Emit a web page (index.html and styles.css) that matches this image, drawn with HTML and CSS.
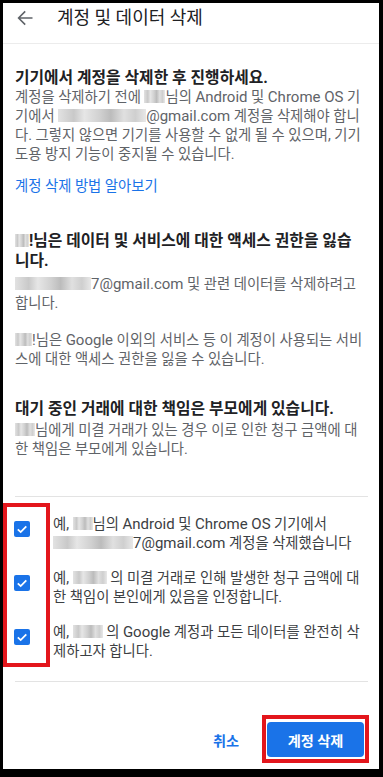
FILE: index.html
```html
<!DOCTYPE html>
<html lang="ko">
<head>
<meta charset="utf-8">
<title>계정 및 데이터 삭제</title>
<link rel="stylesheet" href="styles.css">
</head>
<body>
<div class="frame">
  <header class="topbar">
    <svg class="back" width="16" height="16" viewBox="0 0 16 16" aria-hidden="true">
      <path d="M15.5 8H1.6M8.2 1.4L1.6 8l6.6 6.6" fill="none" stroke="#5f6368" stroke-width="1.6"/>
    </svg>
    <h1 class="title">계정 및 데이터 삭제</h1>
  </header>
  <main class="content">
    <h2 class="h h1">기기에서 계정을 삭제한 후 진행하세요.</h2>
    <p class="p p1">계정을 삭제하기 전에 <span class="blur w21"></span>님의 <span class="en">Android</span> 및 <span class="en">Chrome OS</span> 기기에서 <span class="blur w88"></span><span class="en">@gmail.com</span> 계정을 삭제해야 합니다. 그렇지 않으면 기기를 사용할 수 없게 될 수 있으며, 기기 도용 방지 기능이 중지될 수 있습니다.</p>
    <a class="link" href="#">계정 삭제 방법 알아보기</a>
    <h2 class="h h2"><span class="blur w14"></span>!님은 데이터 및 서비스에 대한 액세스 권한을 잃습니다.</h2>
    <p class="p p2"><span class="blur w76"></span><span class="en">7@gmail.com</span> 및 관련 데이터를 삭제하려고 합니다.</p>
    <p class="p p3"><span class="blur w17"></span>!님은 <span class="en">Google</span> 이외의 서비스 등 이 계정이 사용되는 서비스에 대한 액세스 권한을 잃을 수 있습니다.</p>
    <h2 class="h h3">대기 중인 거래에 대한 책임은 부모에게 있습니다.</h2>
    <p class="p p4"><span class="blur w20"></span>님에게 미결 거래가 있는 경우 이로 인한 청구 금액에 대한 책임은 부모에게 있습니다.</p>
    <hr class="divider d1">
    <div class="checks">
      <span class="highlight hl-checks"></span>
      <label class="check">
        <span class="box"><svg width="16" height="16" viewBox="0 0 16 16"><path d="M3.8 8.3l2.9 2.8 5.6-5.8" fill="none" stroke="#fff" stroke-width="1.8"/></svg></span>
        <span class="ctext">예, <span class="blur w20"></span>님의 <span class="en">Android</span> 및 <span class="en">Chrome OS</span> 기기에서 <span class="blur w80"></span><span class="en">7@gmail.com</span> 계정을 삭제했습니다</span>
      </label>
      <label class="check">
        <span class="box"><svg width="16" height="16" viewBox="0 0 16 16"><path d="M3.8 8.3l2.9 2.8 5.6-5.8" fill="none" stroke="#fff" stroke-width="1.8"/></svg></span>
        <span class="ctext">예, <span class="blur w34"></span> 의 미결 거래로 인해 발생한 청구 금액에 대한 책임이 본인에게 있음을 인정합니다.</span>
      </label>
      <label class="check">
        <span class="box"><svg width="16" height="16" viewBox="0 0 16 16"><path d="M3.8 8.3l2.9 2.8 5.6-5.8" fill="none" stroke="#fff" stroke-width="1.8"/></svg></span>
        <span class="ctext">예, <span class="blur w30"></span> 의 <span class="en">Google</span> 계정과 모든 데이터를 완전히 삭제하고자 합니다.</span>
      </label>
    </div>
    <hr class="divider d2">
    <div class="actions">
      <button class="btn cancel" type="button">취소</button>
      <div class="primary-wrap">
        <button class="btn primary" type="button">계정 삭제</button>
        <span class="highlight hl-btn"></span>
      </div>
    </div>
  </main>
</div>
</body>
</html>
```
FILE: styles.css
```css
* { box-sizing: border-box; }
html, body { margin: 0; padding: 0; background: #000; }
body {
  font-family: Roboto, "Noto Sans CJK KR", sans-serif;
  width: 383px;
  height: 777px;
  overflow: hidden;
}
.frame {
  position: relative;
  width: 383px;
  height: 777px;
  background: #fff;
  border-style: solid;
  border-color: #000;
  border-width: 3px 4px 8px 3px;
  overflow: hidden;
}
.topbar {
  display: flex;
  align-items: center;
  height: 41px;
  padding: 3px 0 13px 14px;
  border-bottom: 1px solid #ececec;
}
.back { flex: none; display: block; }
.title {
  margin: 0 0 0 24px;
  font-size: 18px;
  font-weight: 400;
  line-height: 24px;
  color: #202124;
}
.content {
  padding: 0 15px 0 12px;
  display: flex;
  flex-direction: column;
}
.h {
  margin: 0;
  font-size: 15.8px;
  font-weight: 700;
  line-height: 20px;
  color: #202124;
}
.h1 { margin-top: 24px; }
.h2 { margin-top: 35px; }
.h3 { margin-top: 30px; }
.p {
  margin: 0;
  font-size: 14.35px;
  line-height: 19px;
  color: #5f6368;
}
.en { font-size: 15px; }
.p2 { margin-top: 4px; }
.p3 { margin-top: 18px; }
.p4 { margin-top: 2px; }
.link {
  margin-top: 13px;
  font-size: 14.35px;
  line-height: 19px;
  color: #1a73e8;
  text-decoration: none;
  align-self: flex-start;
}
.blur {
  display: inline-block;
  height: 13px;
  vertical-align: -1px;
  background: linear-gradient(90deg, #e2e2e2 0%, #c9c9c9 18%, #e6e6e6 30%, #d0d0d0 48%, #bcbcbc 60%, #e0e0e0 75%, #cfcfcf 88%, #e8e8e8 100%);
}
.w14 { width: 14px; }
.w17 { width: 17px; }
.w20 { width: 20px; }
.w21 { width: 21px; }
.w30 { width: 30px; }
.w34 { width: 34px; }
.w76 { width: 76px; }
.w80 { width: 80px; }
.w88 { width: 88px; }
.divider {
  margin: 0 -4px 0 0;
  border: 0;
  border-top: 1px solid #e3e3e3;
  height: 0;
}
.d1 { margin-top: 37px; }
.d2 { margin-top: 20px; }
.checks {
  position: relative;
  margin-top: 18px;
  display: flex;
  flex-direction: column;
  gap: 16px;
}
.check {
  display: flex;
  align-items: flex-start;
  gap: 23px;
}
.box {
  flex: none;
  width: 16px;
  height: 16px;
  margin: 6px 0 0 -1px;
  border-radius: 2px;
  background: #1a73e8;
}
.box svg { display: block; }
.ctext {
  font-size: 14.35px;
  line-height: 19px;
  color: #3c4043;
}
.highlight {
  position: absolute;
  border: 4px solid #e3161c;
  pointer-events: none;
}
.hl-checks {
  left: -12px;
  top: -12px;
  width: 47px;
  height: 164px;
}
.actions {
  margin-top: 40px;
  display: flex;
  justify-content: flex-end;
  align-items: center;
}
.btn {
  font-family: Roboto, "Noto Sans CJK KR", sans-serif;
  font-size: 14.2px;
  font-weight: 700;
  height: 35px;
  border: 0;
  border-radius: 4px;
  padding: 0;
  cursor: pointer;
}
.cancel {
  background: transparent;
  color: #1a73e8;
  width: 58px;
  margin-right: 12px;
}
.primary-wrap { position: relative; }
.primary {
  display: block;
  width: 97px;
  background: #1a73e8;
  color: #fff;
}
.hl-btn {
  top: -7px;
  right: -5px;
  bottom: -6px;
  left: -5px;
}
```
